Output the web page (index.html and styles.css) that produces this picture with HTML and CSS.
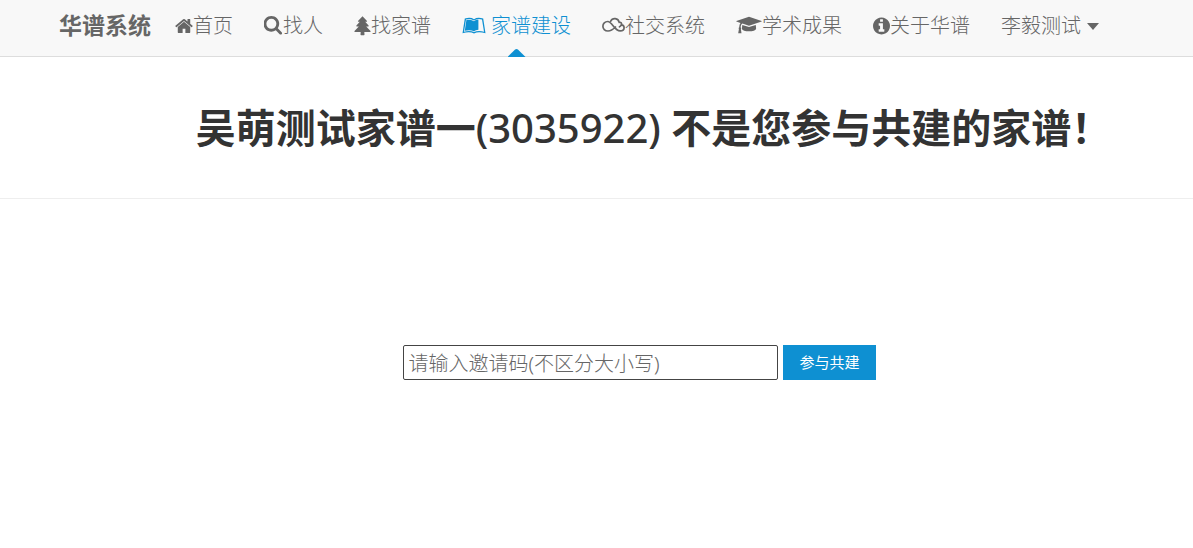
FILE: index.html
```html
<!DOCTYPE html>
<html lang="zh-CN">
<head>
<meta charset="utf-8">
<meta name="viewport" content="width=device-width, initial-scale=1">
<title>华谱系统</title>
<link rel="stylesheet" href="styles.css">
</head>
<body>
<header class="topbar">
  <h1 class="brand"><a href="#">华谱系统</a></h1>
  <nav class="nav">
    <a href="#"><svg class="icon" width="18" height="20" viewBox="64 0 1664 1792" aria-hidden="true"><path d="M1472 992v480q0 26-19 45t-45 19h-384v-384h-256v384h-384q-26 0-45-19t-19-45v-480q0-1 .5-3t.5-3l575-474 575 474q1 2 1 6zm223-69l-62 74q-8 9-21 11h-3q-13 0-21-7l-692-577-692 577q-12 8-24 7-13-2-21-11l-62-74q-8-10-7-23.500t11-21.500l719-599q32-26 76-26t76 26l244 204v-195q0-14 9-23t23-9h192q14 0 23 9t9 23v408l219 182q10 8 11 21.500t-7 23.500z"/></svg>首页</a>
    <a href="#"><svg class="icon" width="19" height="20" viewBox="64 0 1664 1792" aria-hidden="true"><path d="M1152 704q0-185-131.500-316.500t-316.500-131.500-316.500 131.500-131.500 316.500 131.500 316.500 316.500 131.500 316.500-131.500 131.500-316.500zm512 832q0 52-38 90t-90 38q-54 0-90-38l-343-342q-179 124-399 124-143 0-273.500-55.500t-225-150-150-225-55.500-273.500 55.500-273.500 150-225 225-150 273.500-55.500 273.500 55.500 225 150 150 225 55.500 273.500q0 220-124 399l343 343q37 37 37 90z"/></svg>找人</a>
    <a href="#"><svg class="icon" width="17" height="20" viewBox="0 0 17 20" aria-hidden="true"><path d="M8.500 0.300L13 5q.4.7-.4.800H11.200L14.600 9.600q.4.800-.4.900H12.200L16.500 15q.5.900-.5 1H10.300l.2 2.600q0 .6-.6.600H7.100q-.6 0-.6-.6L6.700 16H1Q0 15.900.5 15L4.800 10.500H2.800Q2 10.400 2.400 9.600L5.800 5.800H4.400Q3.600 5.700 4 5Z"/></svg>找家谱</a>
    <a class="current" href="#"><svg class="icon spaced" width="24" height="20" viewBox="0 0 24 20" aria-hidden="true"><path fill-rule="evenodd" d="M2.800 2.600Q8.500.8 12 3.300Q15.500.8 21.200 2.600L23.500 17.300Q16.500 15.300 12 17.400Q7.500 15.300.5 17.300ZM4 3.600L2 15.800Q7.800 14.300 12 16.100Q16.200 14.300 22 15.800L20 3.600Q15.200 2.200 12 4.600Q8.800 2.200 4 3.600Z"/><path d="M4.400 4.100Q9 2.900 12 5.300Q13.500 3.900 16.400 3.600V13.800Q13.600 14 12 15.200Q8.300 13.500 2.800 14.700Z"/></svg>家谱建设</a>
    <a href="#"><svg class="icon" width="23" height="20" viewBox="0 0 23 20" aria-hidden="true"><path fill="none" stroke="currentColor" stroke-width="1.700" stroke-linecap="round" stroke-linejoin="round" d="M13.500 11C11.500 13 9.500 15 6 15C2.800 15 .9 12.800 .9 10.200C.9 7.500 3 5.500 5.700 5.500C10.300 5.500 12.200 14.900 18.200 14.900C20.700 14.900 22.100 13.500 22.100 11.700C22.100 10 21 8.900 19.300 8.800C20.200 7.300 18.800 5.800 17.200 6.400C16.300 1.800 10.400 1.500 8.700 5.200M19.300 8.800Q18.800 10.200 17.500 10.800"/></svg>社交系统</a>
    <a href="#"><svg class="icon" width="26" height="20" viewBox="0 0 26 20" aria-hidden="true"><path d="M13 .8L25.600 5Q26 5.300 25.600 5.600L13 9.700L6.400 7.500Q4.800 8.300 4.600 11.300Q5.700 12 4.900 13.200L5.500 17.300H2.200L2.900 13.200Q2.200 12 3.200 11.300Q3.300 8.300 4.500 6.900L.4 5.600Q0 5.300.4 5ZM6.300 8.900L13 11.100L19.800 8.900L20.100 12.500C20 16.300 6 16.300 5.900 12.500Z"/></svg>学术成果</a>
    <a href="#"><svg class="icon" width="17" height="20" viewBox="128 0 1536 1792" aria-hidden="true"><path d="M1152 1376v-160q0-14-9-23t-23-9h-96v-512q0-14-9-23t-23-9h-320q-14 0-23 9t-9 23v160q0 14 9 23t23 9h96v320h-96q-14 0-23 9t-9 23v160q0 14 9 23t23 9h448q14 0 23-9t9-23zm-128-896v-160q0-14-9-23t-23-9h-192q-14 0-23 9t-9 23v160q0 14 9 23t23 9h192q14 0 23-9t9-23zm640 416q0 209-103 385.500t-279.500 279.500-385.500 103-385.500-103-279.500-279.500-103-385.500 103-385.500 279.500-279.500 385.500-103 385.500 103 279.500 279.500 103 385.500z"/></svg>关于华谱</a>
    <a href="#">李毅测试<span class="caret"></span></a>
  </nav>
</header>
<main>
  <section class="notice">
    <h2>吴萌测试家谱一<span class="number">(3035922) </span>不是您参与共建的家谱！</h2>
  </section>
  <form class="join">
    <input class="code" type="text" aria-label="邀请码" placeholder="请输入邀请码(不区分大小写)">
    <button class="submit" type="button">参与共建</button>
  </form>
</main>
</body>
</html>
```
FILE: styles.css
```css
* {
  box-sizing: border-box;
}

body {
  margin: 0;
  background: #fff;
  color: #333;
  font-family: "Noto Sans", "Noto Sans CJK SC", sans-serif;
}

a {
  color: inherit;
  text-decoration: none;
}

.topbar {
  display: flex;
  gap: 24px;
  padding: 0 59px 4px;
  border-bottom: 1px solid #ddd;
  background: #f8f8f8;
  color: #666;
  white-space: nowrap;
}

.brand {
  margin: 0;
  font-size: 23px;
  line-height: 50px;
}

.nav {
  display: flex;
  gap: 31px;
  font-size: 20px;
  font-weight: 300;
  line-height: 52px;
}

.nav a {
  position: relative;
  display: flex;
  align-items: center;
}

.nav .current {
  color: #0e90d2;
}

.nav .current::after {
  content: "";
  position: absolute;
  bottom: -5px;
  left: 50%;
  width: 18px;
  height: 8px;
  margin-left: -9px;
  background: #0e90d2;
  clip-path: polygon(0 100%, 42% 6%, 50% 0, 58% 6%, 100% 100%);
}

.icon {
  flex: none;
  fill: currentColor;
}

.spaced {
  margin-right: 5px;
}

.caret {
  margin-left: 6px;
  border: 6px solid transparent;
  border-top: 7px solid currentColor;
  border-bottom: 0;
}

.notice {
  padding: 41px 0 40px 114px;
  border-bottom: 1px solid #eee;
  text-align: center;
}

.notice h2 {
  margin: 0;
  font-size: 40px;
  line-height: 60px;
}

.number {
  font-weight: 500;
}

.join {
  display: flex;
  justify-content: center;
  gap: 5px;
  padding: 146px 0 146px 86px;
}

.code {
  width: 375px;
  height: 35px;
  padding: 3px 4px 1px;
  border: 1px solid #444;
  border-radius: 2px;
  font: 300 20px "Noto Sans", "Noto Sans CJK SC", sans-serif;
}

.code::placeholder {
  color: #666;
}

.submit {
  height: 35px;
  padding: 0 16px 2px;
  border: 0;
  background: #0e90d2;
  color: #fff;
  font: 15px "Noto Sans", "Noto Sans CJK SC", sans-serif;
}
```
